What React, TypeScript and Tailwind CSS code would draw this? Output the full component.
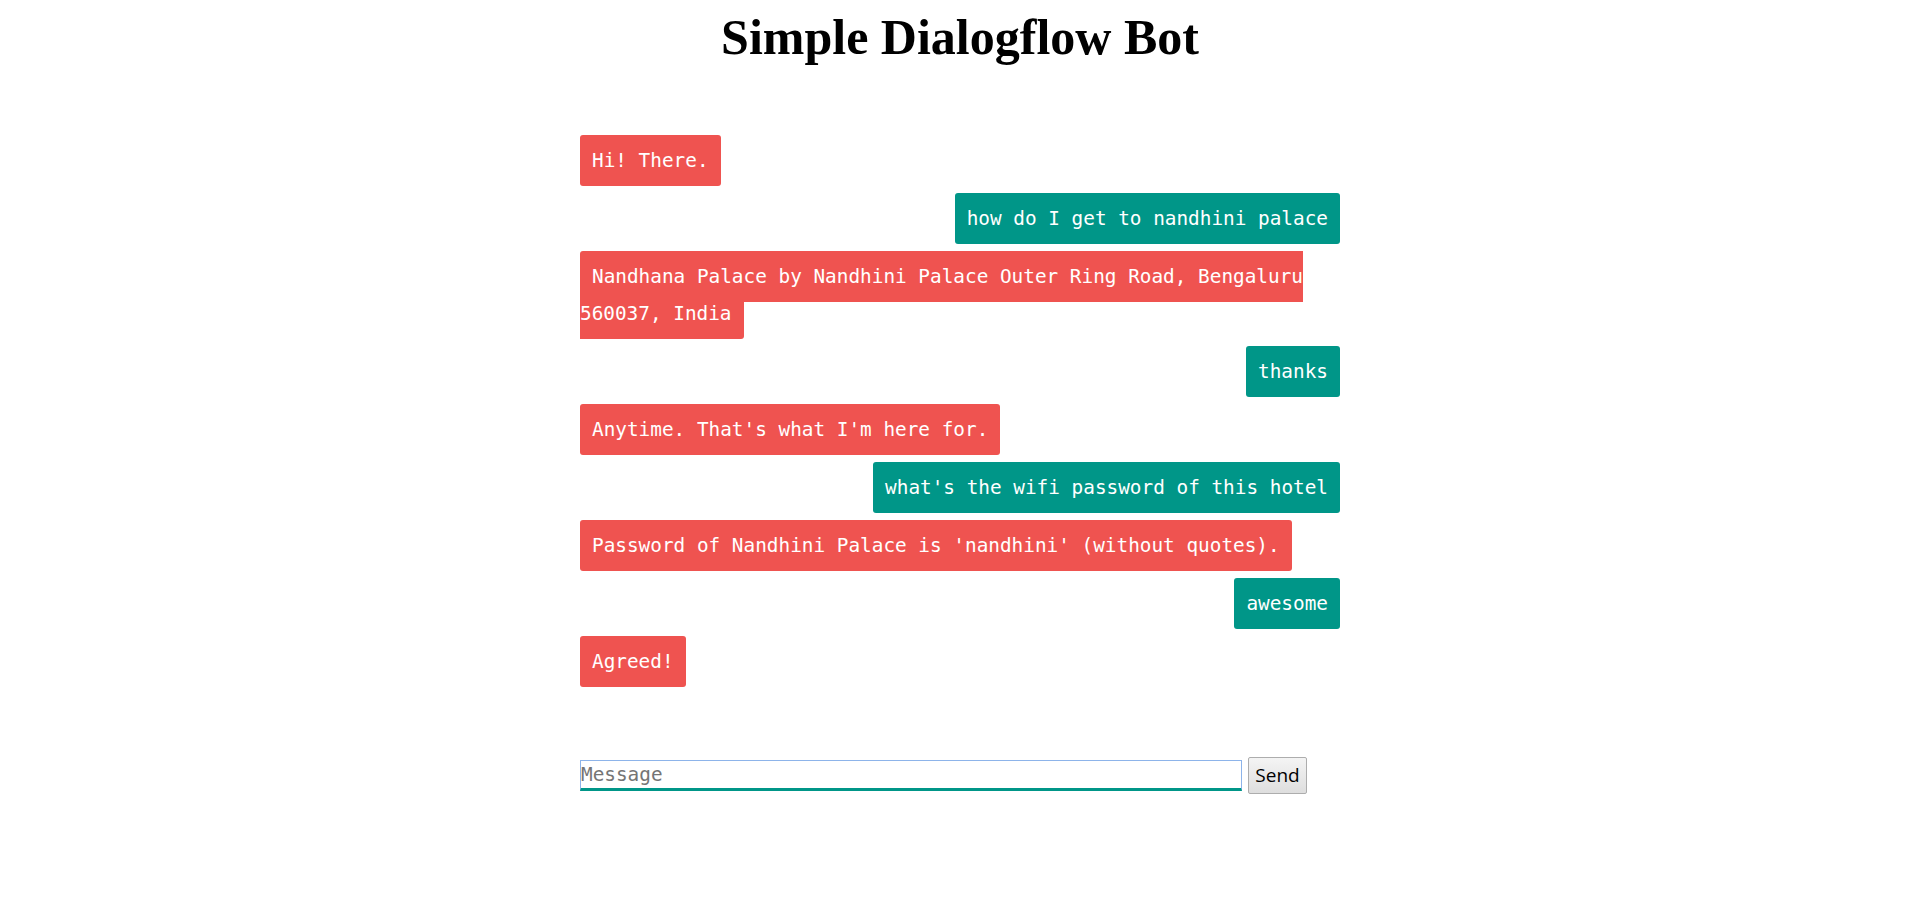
import React from 'react';

const messages = [
  { from: 'bot', text: 'Hi! There.' },
  { from: 'user', text: 'how do I get to nandhini palace' },
  { from: 'bot', text: 'Nandhana Palace by Nandhini Palace Outer Ring Road, Bengaluru 560037, India' },
  { from: 'user', text: 'thanks' },
  { from: 'bot', text: "Anytime. That's what I'm here for." },
  { from: 'user', text: "what's the wifi password of this hotel" },
  { from: 'bot', text: "Password of Nandhini Palace is 'nandhini' (without quotes)." },
  { from: 'user', text: 'awesome' },
  { from: 'bot', text: 'Agreed!' },
];

export default function App() {
  return (
    <div className="min-h-screen bg-white">
      <h1 className="pt-0 text-center text-[50px] font-bold text-black font-['Liberation_Serif',serif]">
        Simple Dialogflow Bot
      </h1>

      <div className="mx-auto w-[760px] pt-[67px]">
        {/* chat log */}
        <div className="font-['DejaVu_Sans_Mono',monospace] text-[19.38px] leading-[37px] text-white">
          {messages.map((m, i) => (
            <div key={i} className={`mb-[21px] ${m.from === 'user' ? 'text-right' : 'text-left'}`}>
              <span
                className={`rounded-[3px] px-[12px] py-[13.8px] ${
                  m.from === 'user' ? 'bg-[#009688]' : 'bg-[#ef5350]'
                }`}
              >
                {m.text}
              </span>
            </div>
          ))}
        </div>

        {/* input row */}
        <div className="mt-[77px] flex items-center gap-[6px]">
          <input
            type="text"
            placeholder="Message"
            className="h-[31px] w-[662px] border border-b-[3px] border-[#8db4ea] border-b-[#009688] px-0 font-['DejaVu_Sans_Mono',monospace] text-[19.38px] text-black placeholder:text-[#757575] outline-none"
          />
          <button className="h-[37px] w-[59px] rounded-[2px] border border-[#adadad] bg-gradient-to-b from-[#f4f4f4] to-[#dedede] font-['Open_Sans',sans-serif] text-[19px] text-black">
            Send
          </button>
        </div>
      </div>
    </div>
  );
}
